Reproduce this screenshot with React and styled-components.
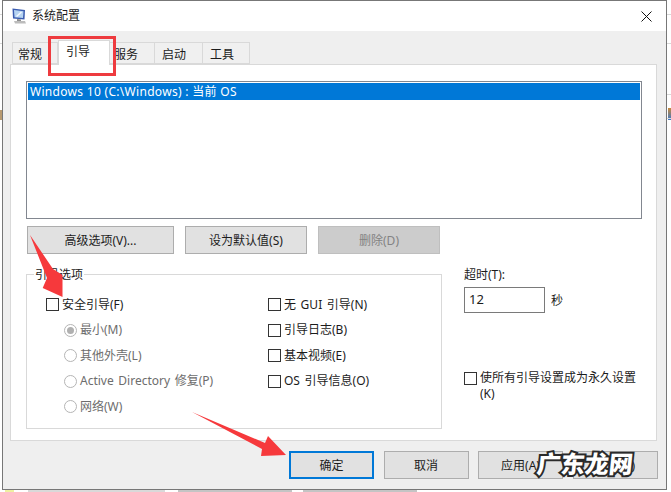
import React from 'react';
import styled, { createGlobalStyle } from 'styled-components';

const GlobalStyle = createGlobalStyle`
  html, body {
    margin: 0;
    padding: 0;
    width: 671px;
    height: 492px;
    overflow: hidden;
  }
  body {
    background:
      linear-gradient(#d8d8d8, #d8d8d8) 667px 14px / 4px 1px no-repeat,
      linear-gradient(#d8d8d8, #d8d8d8) 667px 43px / 4px 1px no-repeat,
      linear-gradient(#d8d8d8, #d8d8d8) 667px 94px / 4px 1px no-repeat,
      linear-gradient(#d8d8d8, #d8d8d8) 667px 118px / 4px 1px no-repeat,
      linear-gradient(#c98a3a, #3a78c9) 668px 108px / 3px 12px no-repeat,
      linear-gradient(#d8d8d8, #d8d8d8) 0 14px / 2px 1px no-repeat,
      linear-gradient(#d8d8d8, #d8d8d8) 0 43px / 2px 1px no-repeat,
      linear-gradient(#b89a70, #b89a70) 0 110px / 2px 10px no-repeat,
      #fff;
    font-family: "Noto Sans", "Noto Sans CJK SC", sans-serif;
    font-size: 12px;
    color: #1c1c1c;
  }
`;

const Page = styled.div`
  position: relative;
  width: 671px;
  height: 492px;
`;

const Window = styled.div`
  box-sizing: border-box;
  width: 665px;
  height: 490px;
  margin-left: 2px;
  border: 1px solid #777;
  display: flex;
  flex-direction: column;
  background: #efefef;
`;

const TitleBar = styled.div`
  height: 30px;
  flex: none;
  background: #fff;
  display: flex;
  align-items: center;
  padding: 0 9px;
`;

const TitleText = styled.span`
  margin-left: 5px;
  font-size: 12px;
  line-height: 16px;
`;

const CloseIcon = styled.svg`
  width: 11px;
  height: 11px;
  margin-left: auto;
  margin-right: 5px;
`;

const Content = styled.div`
  flex: 1;
  display: flex;
  flex-direction: column;
  padding: 9px 0 0 7px;
`;

const TabRow = styled.div`
  display: flex;
  align-items: flex-end;
  height: 24px;
  padding-left: 2px;
`;

const Tab = styled.div`
  box-sizing: border-box;
  width: ${(p) => p.$width}px;
  height: ${(p) => (p.$active ? 25 : 22)}px;
  padding-left: ${(p) => p.$pad}px;
  margin-bottom: ${(p) => (p.$active ? -1 : 0)}px;
  line-height: ${(p) => (p.$active ? 22 : 23)}px;
  background: ${(p) => (p.$active ? '#fff' : '#f0f0f0')};
  border: 1px solid #d9d9d9;
  border-bottom: ${(p) => (p.$active ? 'none' : '1px solid #d9d9d9')};
  border-left: ${(p) => (p.$noLeft ? 'none' : '1px solid #d9d9d9')};
  position: relative;
  z-index: ${(p) => (p.$active ? 1 : 0)};
`;

const Panel = styled.div`
  box-sizing: border-box;
  width: 647px;
  height: 377px;
  background: #fff;
  border: 1px solid #d9d9d9;
  padding: 16px 0 0 15px;
`;

const BootList = styled.div`
  box-sizing: border-box;
  width: 616px;
  height: 138px;
  border: 1px solid #828790;
  padding: 1px;
`;

const BootItem = styled.div`
  height: 17px;
  line-height: 17px;
  padding-left: 2px;
  background: #0078d7;
  color: #fff;
  font-size: 12px;
  letter-spacing: 0.3px;
`;

const ActionRow = styled.div`
  display: flex;
  gap: 11px;
  margin: 7px 0 0 1px;
`;

const Button = styled.div`
  box-sizing: border-box;
  width: ${(p) => p.$width}px;
  height: 28px;
  display: flex;
  align-items: center;
  justify-content: center;
  background: ${(p) => (p.$disabled ? '#ccc' : '#e1e1e1')};
  border: ${(p) => (p.$primary ? '2px solid #0078d7' : p.$disabled ? '1px solid #bfbfbf' : '1px solid #adadad')};
  color: ${(p) => (p.$disabled ? '#838383' : 'inherit')};
`;

const OptionsRow = styled.div`
  display: flex;
  align-items: flex-start;
  margin-top: 20px;
`;

const Group = styled.div`
  box-sizing: border-box;
  position: relative;
  width: 416px;
  height: 155px;
  border: 1px solid #d9d9d9;
  padding: 17px 0 0 19px;
  display: grid;
  grid-template-columns: 222px 1fr;
  grid-auto-flow: column;
  grid-template-rows: repeat(5, 25.5px);
`;

const Legend = styled.span`
  position: absolute;
  top: -8px;
  left: 7px;
  padding: 0 1px;
  background: #fff;
  line-height: 16px;
`;

const Option = styled.label`
  display: flex;
  align-items: center;
  gap: 3px;
  padding-left: ${(p) => (p.$indent ? 18 : 0)}px;
  color: ${(p) => (p.$muted ? '#6d6d6d' : 'inherit')};
  line-height: 16px;
  word-spacing: 1.5px;
`;

const CheckBox = styled.span`
  box-sizing: border-box;
  flex: none;
  width: 13px;
  height: 13px;
  border: 1px solid #333;
  background: #fff;
`;

const TopCheckBox = styled(CheckBox)`
  margin-top: 2px;
`;

const Radio = styled.span`
  box-sizing: border-box;
  flex: none;
  width: 13px;
  height: 13px;
  border-radius: 50%;
  border: 1px solid #b5b5b5;
  background: #fff;
  display: flex;
  align-items: center;
  justify-content: center;
  &::after {
    content: '';
    display: ${(p) => (p.$checked ? 'block' : 'none')};
    width: 7px;
    height: 7px;
    border-radius: 50%;
    background: #b0b0b0;
  }
`;

const SideColumn = styled.div`
  display: flex;
  flex-direction: column;
  margin: -7px 0 0 22px;
`;

const SideLabel = styled.span`
  line-height: 16px;
`;

const TimeoutRow = styled.div`
  display: flex;
  align-items: center;
  gap: 6px;
  margin-top: 4px;
`;

const TimeoutInput = styled.div`
  box-sizing: border-box;
  width: 81px;
  height: 26px;
  border: 1px solid #7a7a7a;
  padding-left: 4px;
  line-height: 22px;
  font-size: 13px;
`;

const PermanentRow = styled.div`
  display: flex;
  align-items: flex-start;
  gap: 3px;
  margin-top: 57px;
`;

const PermanentText = styled.span`
  width: 165px;
  line-height: 16px;
`;

const FooterRow = styled.div`
  display: flex;
  gap: 9.5px;
  margin: 10px 0 0 279px;
`;

const Overlay = styled.svg`
  position: absolute;
  inset: 0;
  width: 671px;
  height: 492px;
  pointer-events: none;
`;

const Watermark = styled.span`
  position: absolute;
  left: 537px;
  top: 447px;
  font-size: 24px;
  line-height: 32px;
  font-weight: 900;
  font-family: "Noto Sans CJK SC", sans-serif;
  color: #fff;
  -webkit-text-stroke: 4px #2a2a2a;
  paint-order: stroke fill;
  transform: skewX(-6deg);
`;

const Scraps = styled.div`
  display: flex;
  height: 2px;
`;

const Scrap = styled.div`
  width: ${(p) => p.$width}px;
  margin-left: ${(p) => p.$gap}px;
  background: ${(p) => p.$color};
`;

const MonitorIcon = () => (
  <svg width="15" height="16" viewBox="0 0 15 16">
    <path d="M0.5 0.5 L13 2 L12.5 11.5 L1 10.5 Z" fill="#3a5cb0" />
    <path d="M2 2 L11.5 3.2 L11 10 L2.5 9.2 Z" fill="#b6d4f2" />
    <path d="M4.5 8.5 L9.5 4" stroke="#f4f9ff" strokeWidth="1.5" />
    <path d="M5 11 L9 11.4 L9 13 L5 13 Z" fill="#8e8e8e" />
    <path d="M2 13 L13 13 L14 15.5 L3 15.5 Z" fill="#bcbcbc" />
  </svg>
);

const App = () => {
  return (
    <Page>
      <GlobalStyle />
      <Window>
        <TitleBar>
          <MonitorIcon />
          <TitleText>系统配置</TitleText>
          <CloseIcon viewBox="0 0 11 11">
            <path d="M0.5 0.5 L10.5 10.5 M10.5 0.5 L0.5 10.5" stroke="#111" strokeWidth="1" fill="none" />
          </CloseIcon>
        </TitleBar>
        <Content>
          <TabRow>
            <Tab $width={46} $pad={5}>常规</Tab>
            <Tab $width={52} $pad={7} $active>引导</Tab>
            <Tab $width={45} $pad={4} $noLeft>服务</Tab>
            <Tab $width={48} $pad={7} $noLeft>启动</Tab>
            <Tab $width={47} $pad={7} $noLeft>工具</Tab>
          </TabRow>
          <Panel>
            <BootList>
              <BootItem>Windows 10 (C:\Windows) : 当前 OS</BootItem>
            </BootList>
            <ActionRow>
              <Button $width={147}>高级选项(V)...</Button>
              <Button $width={122}>设为默认值(S)</Button>
              <Button $width={122} $disabled>删除(D)</Button>
            </ActionRow>
            <OptionsRow>
              <Group>
                <Legend>引导选项</Legend>
                <Option><CheckBox />安全引导(F)</Option>
                <Option $indent $muted><Radio $checked />最小(M)</Option>
                <Option $indent $muted><Radio />其他外壳(L)</Option>
                <Option $indent $muted><Radio />Active Directory 修复(P)</Option>
                <Option $indent $muted><Radio />网络(W)</Option>
                <Option><CheckBox />无 GUI 引导(N)</Option>
                <Option><CheckBox />引导日志(B)</Option>
                <Option><CheckBox />基本视频(E)</Option>
                <Option><CheckBox />OS 引导信息(O)</Option>
              </Group>
              <SideColumn>
                <SideLabel>超时(T):</SideLabel>
                <TimeoutRow>
                  <TimeoutInput>12</TimeoutInput>
                  <span>秒</span>
                </TimeoutRow>
                <PermanentRow>
                  <TopCheckBox />
                  <PermanentText>使所有引导设置成为永久设置 (K)</PermanentText>
                </PermanentRow>
              </SideColumn>
            </OptionsRow>
          </Panel>
          <FooterRow>
            <Button $width={85} $primary>确定</Button>
            <Button $width={85}>取消</Button>
            <Button $width={85}>应用(A)</Button>
            <Button $width={85}>帮助(H)</Button>
          </FooterRow>
        </Content>
      </Window>
      <Scraps>
        <Scrap $width={9} $gap={5} $color="#eef0a0" />
        <Scrap $width={137} $gap={14} $color="#d9d9d9" />
        <Scrap $width={114} $gap={13} $color="#c4c4c4" />
        <Scrap $width={114} $gap={11} $color="#c4c4c4" />
      </Scraps>
      <Overlay viewBox="0 0 671 492">
        <rect x="49.5" y="37.5" width="65" height="37" fill="none" stroke="#ee3b3f" strokeWidth="3" />
        <polygon points="30,235 53,269 62.5,275 62.5,297 42.7,288 47,278" fill="#f6393c" />
        <polygon points="192,412 265,443 268,436 286,455 261,456 262,449" fill="#f6393c" />
      </Overlay>
      <Watermark>广东龙网</Watermark>
    </Page>
  );
};

export default App;
